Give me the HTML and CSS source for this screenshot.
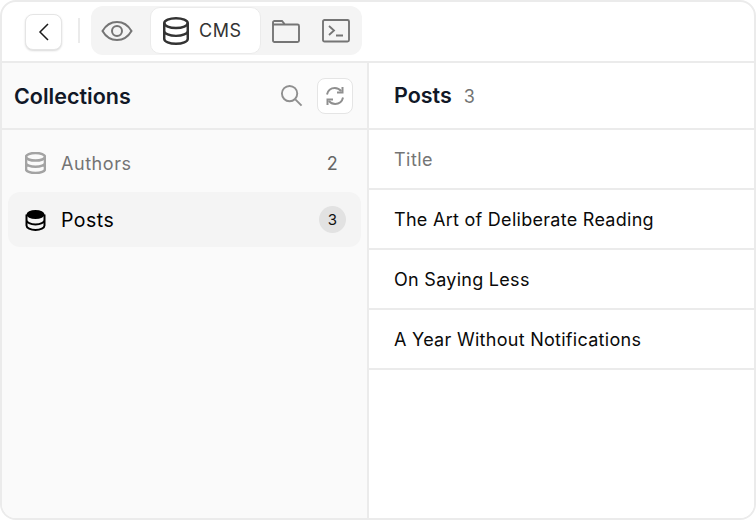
FILE: index.html
```html
<!DOCTYPE html>
<html lang="en">
<head>
  <meta charset="UTF-8">
  <title>CMS</title>
  <link rel="stylesheet" href="styles.css">
</head>
<body>

<!-- Icon used by the tab and the Authors row -->
<svg class="icon-defs" width="0" height="0">
  <symbol id="db" viewBox="1.500 0.500 21 23" preserveAspectRatio="none">
    <ellipse cx="12" cy="5.500" rx="9.500" ry="4" fill="none" stroke="currentColor"/>
    <path d="M2.500 5.500v13c0 2.200 4.250 4 9.500 4s9.500-1.800 9.500-4v-13M2.500 12c0 2.200 4.250 4 9.500 4s9.500-1.800 9.500-4" fill="none" stroke="currentColor"/>
  </symbol>
</svg>

<div class="app-frame">
  <!-- Top toolbar -->
  <div class="toolbar">
    <button class="back-btn" type="button">
      <svg width="20" height="20" viewBox="0 0 20 20"><path d="M14 2l-8 8 8 8" fill="none" stroke="#1a1a1a" stroke-width="1.500"/></svg>
    </button>
    <div class="toolbar-divider"></div>
    <div class="tab-group">
      <div class="tab tab-eye">
        <svg width="32" height="24" viewBox="0 0 32 24"><path d="M1.500 12C5 6 10 3 16 3s11 3 14.500 9C27 18 22 21 16 21S5 18 1.500 12z" fill="none" stroke="#757575" stroke-width="2"/><circle cx="16" cy="12" r="5" fill="none" stroke="#757575" stroke-width="2"/></svg>
      </div>
      <div class="tab tab-active">
        <svg class="tab-db" width="26" height="28"><use href="#db"/></svg>
        <span>CMS</span>
      </div>
      <div class="tab">
        <svg width="28" height="24" viewBox="0 0 28 24"><path d="M1 21.500V3.500C1 2.700 1.700 2 2.500 2h7.500l3 3.500h12.500c.8 0 1.500.7 1.500 1.500v14.500c0 .8-.7 1.500-1.500 1.500h-23C1.700 23 1 22.300 1 21.500zM1 5.500h12" fill="none" stroke="#757575" stroke-width="1.900"/></svg>
      </div>
      <div class="tab">
        <svg width="28" height="24" viewBox="0 0 28 24"><rect x="1" y="1" width="26" height="21.500" rx="1.500" fill="none" stroke="#757575" stroke-width="1.900"/><path d="M7 7l5 4.500-5 4.500M14 16.500h7" fill="none" stroke="#757575" stroke-width="1.800"/></svg>
      </div>
    </div>
  </div>

  <div class="workspace">
    <!-- Collections sidebar -->
    <div class="sidebar">
      <div class="sidebar-header">
        <div class="sidebar-title">Collections</div>
        <svg class="search-icon" width="23" height="23" viewBox="0 0 24 24"><circle cx="10" cy="10" r="8" fill="none" stroke="#8f8f8f" stroke-width="2"/><path d="M16 16l6.500 6.500" stroke="#8f8f8f" stroke-width="2"/></svg>
        <button class="refresh-btn" type="button">
          <svg width="20" height="20" viewBox="0 0 20 20"><path d="M2 8.500C2.700 4.800 5.800 2 9.800 2c2.800 0 4.900 1.300 6.400 3.200M18 11.500c-.7 3.700-3.800 6.500-7.800 6.500-2.800 0-4.900-1.300-6.400-3.200" fill="none" stroke="#8f8f8f" stroke-width="2"/><path d="M17.500 1v5.500H12M2.500 19v-5.500H8" fill="none" stroke="#8f8f8f" stroke-width="2"/></svg>
        </button>
      </div>
      <div class="collection-list">
        <div class="collection-row">
          <svg class="row-icon row-icon-muted" width="21" height="22"><use href="#db"/></svg>
          <span class="row-name">Authors</span>
          <span class="row-count">2</span>
        </div>
        <div class="collection-row row-selected">
          <svg class="row-icon" width="21" height="22" viewBox="0 0 20 22"><ellipse cx="10" cy="5.500" rx="9" ry="4.500" fill="#000"/><path d="M1 5.500v11c0 2.500 4 4.500 9 4.500s9-2 9-4.500v-11M1 11c0 2.500 4 4.500 9 4.500s9-2 9-4.500" fill="none" stroke="#000" stroke-width="2"/></svg>
          <span class="row-name">Posts</span>
          <span class="row-badge">3</span>
        </div>
      </div>
    </div>

    <!-- Entries table -->
    <div class="content">
      <div class="content-header">
        <span class="content-title">Posts</span>
        <span class="content-count">3</span>
      </div>
      <div class="table-head">Title</div>
      <div class="table-row">The Art of Deliberate Reading</div>
      <div class="table-row">On Saying Less</div>
      <div class="table-row">A Year Without Notifications</div>
    </div>
  </div>
</div>

</body>
</html>
```

FILE: styles.css
```css
* {
  box-sizing: border-box;
}
body {
  margin: 0;
  font-family: Inter, "Liberation Sans", sans-serif;
  background-color: #fff;
}
.icon-defs {
  position: absolute;
}
.app-frame {
  width: 756px;
  height: 520px;
  border: 2px solid #ebebeb;
  border-radius: 16px;
  overflow: hidden;
  display: flex;
  flex-direction: column;
  background-color: #fff;
}
.toolbar {
  height: 61px;
  flex-shrink: 0;
  display: flex;
  align-items: center;
  padding-left: 23px;
  padding-bottom: 2px;
  border-bottom: 2px solid #ebebeb;
}
.back-btn {
  width: 37px;
  height: 36px;
  display: flex;
  align-items: center;
  justify-content: center;
  padding: 0;
  margin-top: 2px;
  background-color: #fff;
  border: 1px solid #e5e5e5;
  border-radius: 8px;
  box-shadow: 0 1px 2px rgba(0, 0, 0, 0.15);
}
.toolbar-divider {
  width: 2px;
  height: 25px;
  margin-left: 16px;
  margin-right: 11px;
  background-color: #ebebeb;
}
.tab-group {
  height: 49px;
  display: flex;
  align-items: center;
  padding: 1px;
  background-color: #f4f4f4;
  border-radius: 12px;
}
.tab {
  height: 47px;
  width: 50px;
  display: flex;
  align-items: center;
  justify-content: center;
  color: #404040;
}
.tab-eye {
  width: 58px;
  padding-right: 8px;
}
.tab-active {
  width: 111px;
  justify-content: flex-start;
  padding-left: 12px;
  gap: 10px;
  background-color: #fff;
  border: 1px solid #ebebeb;
  border-radius: 10px;
  font-size: 18px;
  letter-spacing: 0.6px;
  color: #333;
}
.tab-db {
  color: #333;
  stroke-width: 2;
}
.workspace {
  flex: 1;
  display: flex;
  min-height: 0;
}
.sidebar {
  width: 367px;
  flex-shrink: 0;
  background-color: #fafafa;
  border-right: 2px solid #ebebeb;
}
.sidebar-header {
  height: 67px;
  display: flex;
  align-items: center;
  padding-left: 12px;
  padding-right: 14px;
  border-bottom: 2px solid #ebebeb;
}
.sidebar-title {
  flex: 1;
  font-size: 21.500px;
  font-weight: 600;
  color: #111827;
}
.search-icon {
  margin-right: 14px;
}
.refresh-btn {
  width: 36px;
  height: 36px;
  display: flex;
  align-items: center;
  justify-content: center;
  padding: 0;
  background-color: #fff;
  border: 1px solid #e5e5e5;
  border-radius: 8px;
}
.collection-list {
  padding: 6px;
  display: flex;
  flex-direction: column;
  gap: 2px;
}
.collection-row {
  height: 54px;
  display: flex;
  align-items: center;
  padding-left: 17px;
  padding-right: 15px;
  border-radius: 12px;
  font-size: 18px;
  letter-spacing: 0.55px;
  color: #737373;
}
.row-selected {
  height: 55px;
  background-color: #f4f4f4;
  color: #000;
  font-size: 19.500px;
  letter-spacing: 0.5px;
}
.row-icon {
  flex-shrink: 0;
}
.row-icon-muted {
  color: #a3a3a3;
  stroke-width: 2.6;
}
.row-name {
  flex: 1;
  margin-left: 15px;
}
.row-selected .row-name {
  padding-top: 1px;
}
.row-count {
  width: 27px;
  text-align: center;
  color: #666;
}
.row-badge {
  width: 27px;
  height: 27px;
  display: flex;
  align-items: center;
  justify-content: center;
  border-radius: 50%;
  background-color: #e2e2e2;
  font-size: 15px;
  letter-spacing: 0;
  color: #111;
}
.content {
  flex: 1;
  background-color: #fff;
}
.content-header {
  height: 67px;
  display: flex;
  align-items: center;
  gap: 12px;
  padding-left: 25px;
  border-bottom: 2px solid #ebebeb;
}
.content-title {
  margin-top: -2px;
  font-size: 21.500px;
  font-weight: 600;
  color: #111827;
}
.content-count {
  margin-top: 2px;
  font-size: 18px;
  color: #737373;
}
.table-head,
.table-row {
  height: 60px;
  display: flex;
  align-items: center;
  padding-left: 25px;
  border-bottom: 2px solid #ebebeb;
  font-size: 18px;
  letter-spacing: 0.28px;
}
.table-head {
  letter-spacing: 0.45px;
  color: #757575;
}
.table-row {
  color: #0a0a0a;
}
```
